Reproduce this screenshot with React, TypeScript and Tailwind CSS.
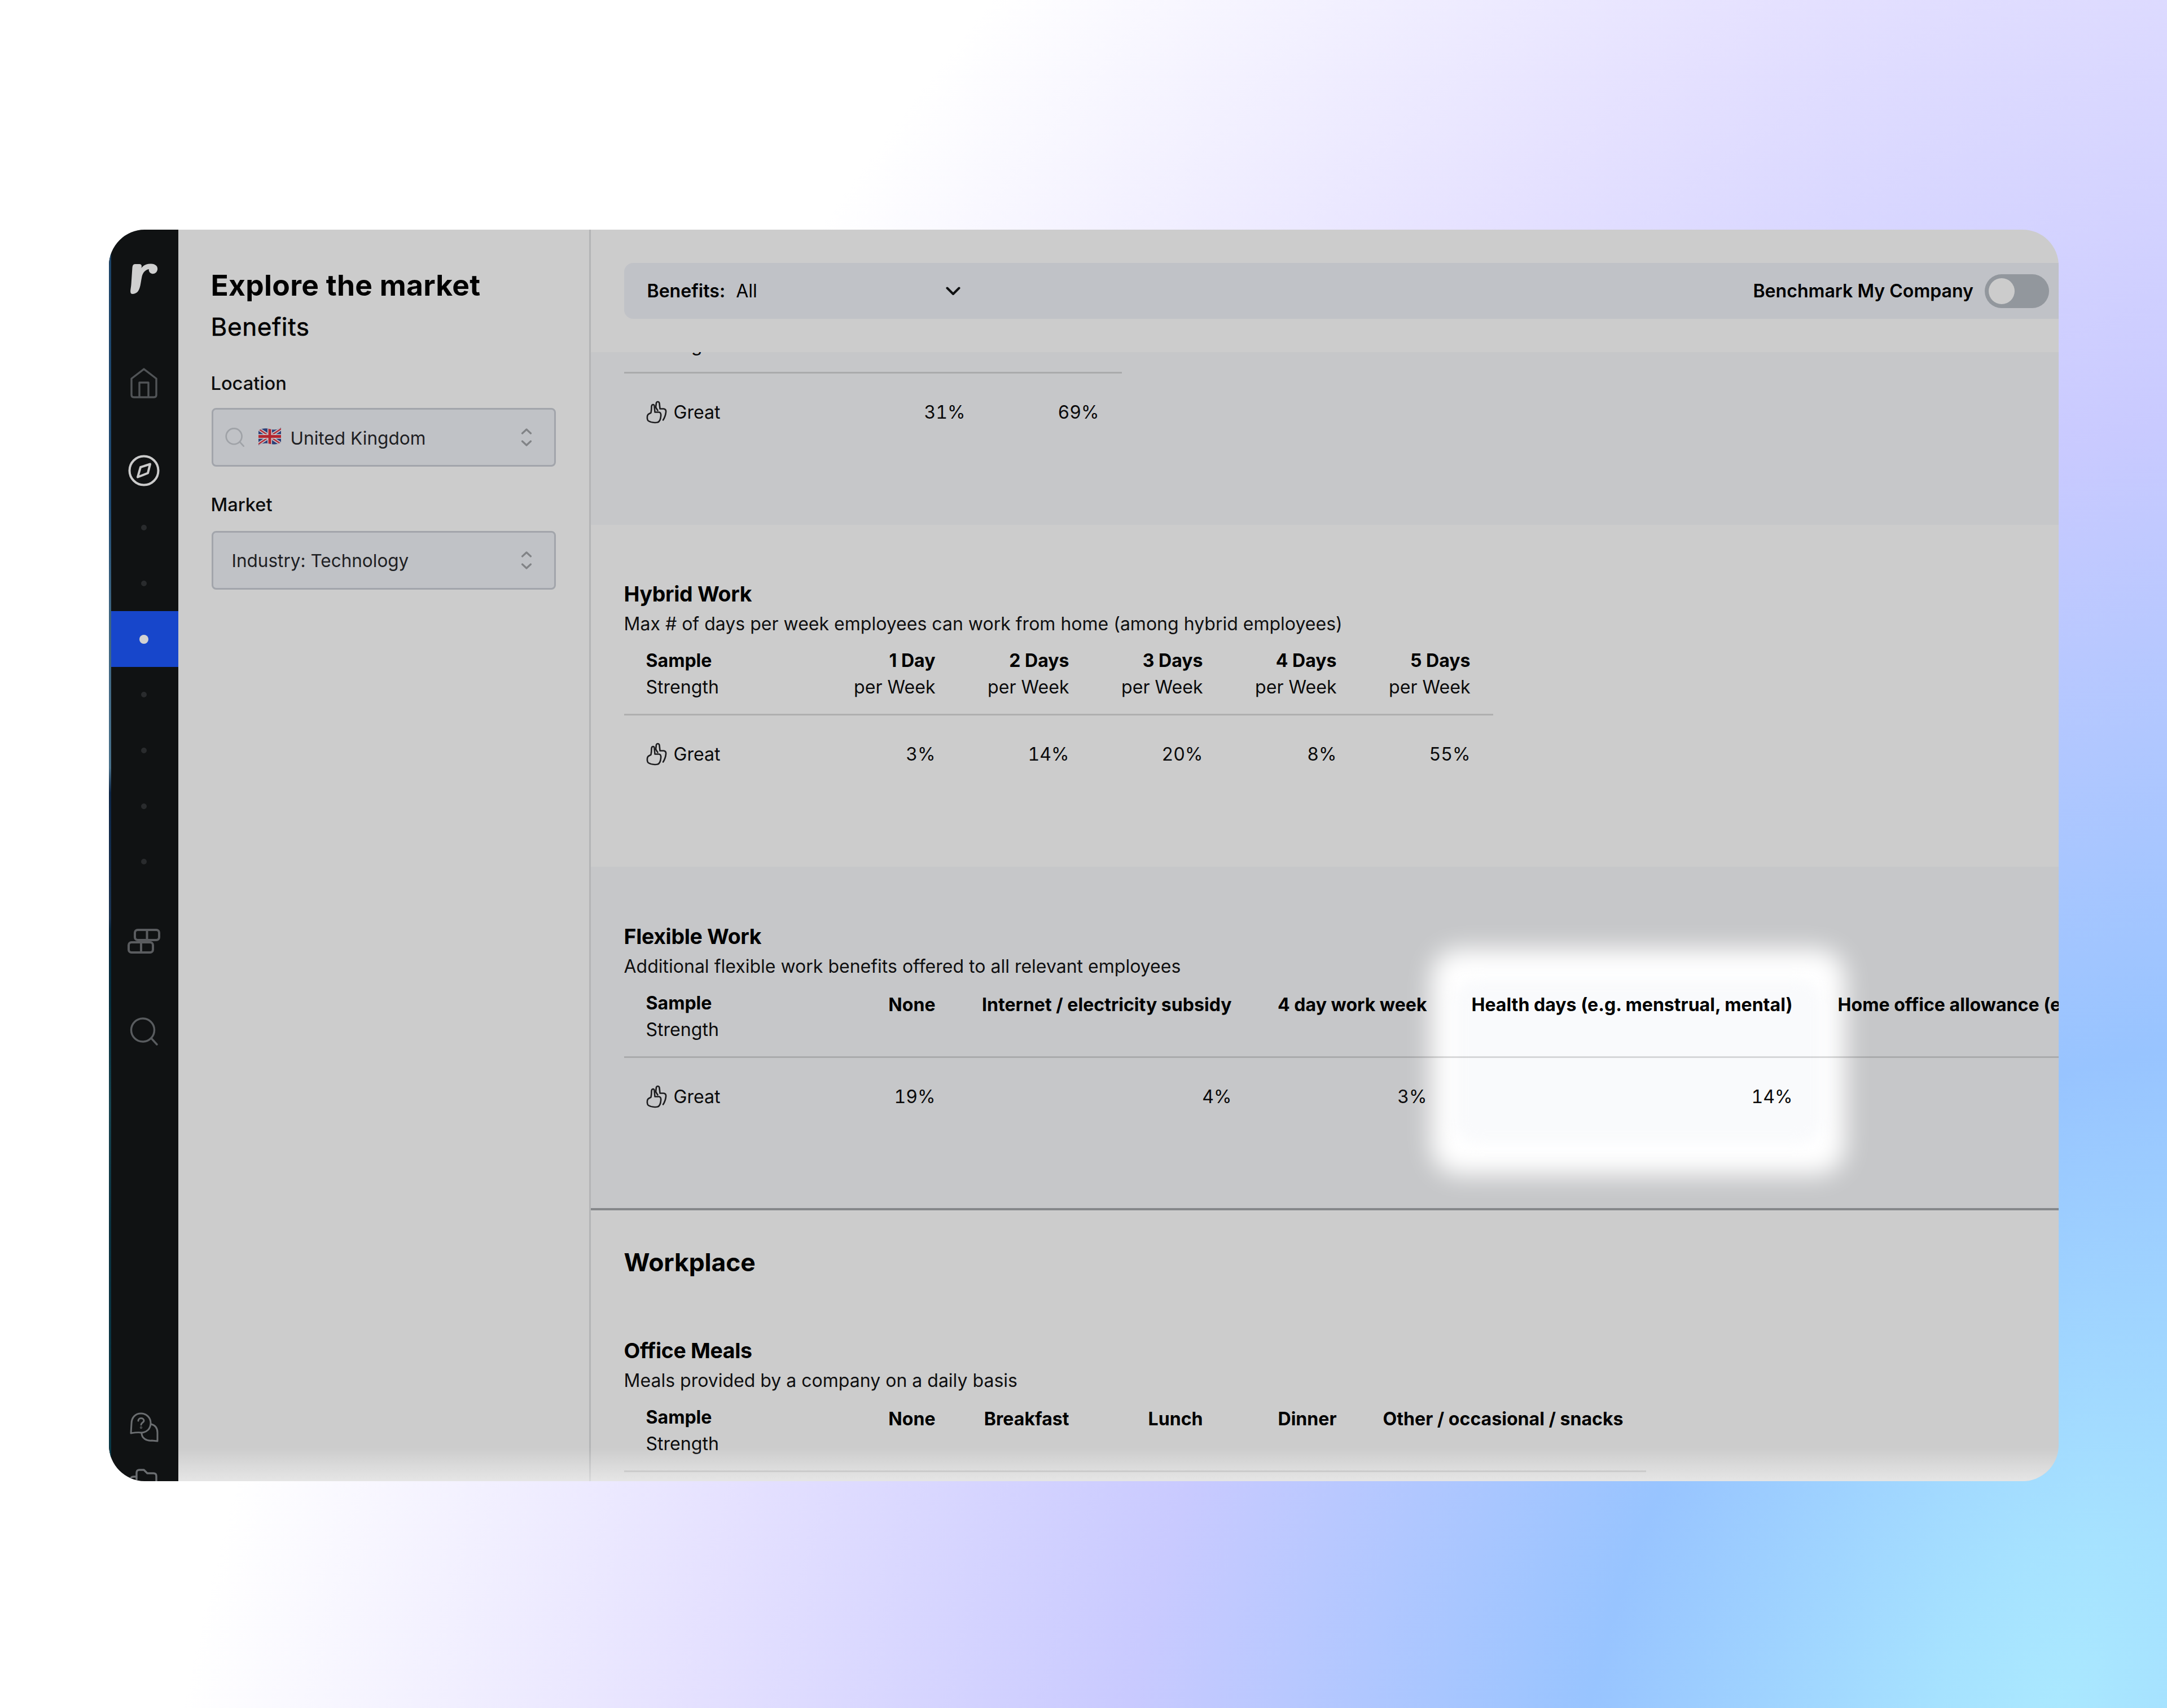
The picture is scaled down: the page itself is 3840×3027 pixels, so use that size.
import type { ReactNode } from "react";

type Column = { label: string; sub?: string; value?: string; width: number };

const remoteWork: Column[] = [
  { label: "", value: "31%", width: 237 },
  { label: "", value: "69%", width: 237 },
];

const hybridWork: Column[] = [
  { label: "1 Day", sub: "per Week", value: "3%", width: 237 },
  { label: "2 Days", sub: "per Week", value: "14%", width: 237 },
  { label: "3 Days", sub: "per Week", value: "20%", width: 237 },
  { label: "4 Days", sub: "per Week", value: "8%", width: 237 },
  { label: "5 Days", sub: "per Week", value: "55%", width: 237 },
];

const flexibleWork: Column[] = [
  { label: "None", value: "19%", width: 237 },
  { label: "Internet / electricity subsidy", value: "4%", width: 525 },
  { label: "4 day work week", value: "3%", width: 346 },
  { label: "Health days (e.g. menstrual, mental)", value: "14%", width: 648 },
  { label: "Home office allowance (e.g. desk)", value: "", width: 612 },
];

const officeMeals: Column[] = [
  { label: "None", width: 237 },
  { label: "Breakfast", width: 237 },
  { label: "Lunch", width: 237 },
  { label: "Dinner", width: 237 },
  { label: "Other / occasional / snacks", width: 508 },
];

function Logo() {
  return (
    <svg width="50" height="56" viewBox="0 0 50 56" fill="#cfcfcf">
      <path d="M9 2H17Q21 2 21 6L20.5 9C25 3 31 1 38 1.5C46 2 50 6 49 12C48 17 44 20 39 19C35 18 33 14 34 11C28 12 23 17 21.5 24C19 36 19 46 13 52C9 55 4 56 2 54C0 51 2 45 2.5 38L4.5 8Q5 2 9 2Z" />
    </svg>
  );
}

function HomeIcon() {
  return (
    <svg width="50" height="54" viewBox="0 0 50 54" fill="none" stroke="#515457" strokeWidth="3.4" strokeLinejoin="round" strokeLinecap="round">
      <path d="M3 19 25 2 47 19V48Q47 52 43 52H7Q3 52 3 48Z" />
      <path d="M17 51V26H33V51" />
    </svg>
  );
}

function CompassIcon() {
  return (
    <svg width="56" height="56" viewBox="0 0 56 56" fill="none" stroke="#cbcbcb" strokeWidth="4" strokeLinejoin="round">
      <circle cx="28" cy="28" r="25.500" />
      <path d="M39 16.500 35 32.500 17 39.500 22 22Z" />
    </svg>
  );
}

function BricksIcon() {
  return (
    <svg width="58" height="44" viewBox="0 0 58 44" fill="none" stroke="#5a5c5f" strokeWidth="4">
      <rect x="13" y="2" width="43" height="18" rx="5" />
      <path d="M34.500 2V20M24 24V42" />
      <rect x="2" y="24" width="43" height="18" rx="5" />
    </svg>
  );
}

function SearchIcon({ size, color, weight }: { size: number; color: string; weight: number }) {
  return (
    <svg width={size} height={size} viewBox="0 0 50 50" fill="none" stroke={color} strokeWidth={weight} strokeLinecap="round">
      <circle cx="23" cy="22.500" r="20.500" />
      <path d="M38 37 48 48" />
    </svg>
  );
}

function ChatIcon() {
  return (
    <svg width="54" height="54" viewBox="0 0 54 54" fill="none" stroke="#6b6e71" strokeWidth="3" strokeLinejoin="round" strokeLinecap="round">
      <path d="M3 37 4 20C4 9 11 2 21 2 31 2 38 10 38 19 38 29 31 36 21 36 16 35 9 36 3 37Z" />
      <path d="M39 21C47 23 50 29 50 36V51L40 50C31 51 22 46 22 37" />
      <path d="M16 15C16 9 26 9 26 15 26 18 21 18 21 22" />
      <circle cx="21" cy="27" r="0.6" />
    </svg>
  );
}

function FolderIcon() {
  return (
    <svg width="54" height="50" viewBox="0 0 54 50" fill="none" stroke="#6b6e71" strokeWidth="3.400" strokeLinejoin="round">
      <path d="M13 50V8Q13 3 18 3H26L32 9H43Q48 9 48 14V50" />
      <path d="M12 15H8Q2 15 2 21V50" />
    </svg>
  );
}

function SortIcon() {
  return (
    <svg width="22" height="34" viewBox="0 0 22 34" fill="none" stroke="#818386" strokeWidth="3.200" strokeLinecap="round" strokeLinejoin="round">
      <path d="M3.500 10 11 3 18.500 10M3.500 24 11 31 18.500 24" />
    </svg>
  );
}

function FlagIcon() {
  return (
    <svg width="40" height="31" viewBox="0 0 40 31">
      <defs>
        <clipPath id="flag">
          <path d="M0 5C8 0 14 1 20 2.500 27 4 33 4 40 0V26C33 30 27 30 20 28.500 14 27 8 27 0 31Z" />
        </clipPath>
      </defs>
      <g clipPath="url(#flag)">
        <rect width="40" height="31" fill="#2c4078" />
        <path d="M0 2 40 29M40 2 0 29" stroke="#c8c8cc" strokeWidth="6" />
        <path d="M0 2 40 29M40 2 0 29" stroke="#b3303a" strokeWidth="2.600" />
        <path d="M20 0V31M0 15.500H40" stroke="#c8c8cc" strokeWidth="8" />
        <path d="M20 0V31M0 15.500H40" stroke="#b3262f" strokeWidth="5" />
      </g>
    </svg>
  );
}

function ThumbsIcon() {
  return (
    <svg width="38" height="42" viewBox="0 0 38 42" fill="none" stroke="#1d1d1f" strokeWidth="2.600" strokeLinejoin="round" strokeLinecap="round">
      <path d="M8.500 21.500C9.500 17 9.500 14 9.500 10.500 10 6 14 6 14.500 9.500L15.500 20.500H23C26 21 26.500 24 26 28 25.500 33 24 37.500 20 38.500 15 39.500 8 38.500 4 36 1.500 34 1.500 29 2.500 26 3.500 23.500 6.500 23 8.500 21.500Z" />
      <path d="M17 12 18 4C19 1 23 1.500 23.500 5L24.500 14.500H31C34 15 35.500 17 35 20.500 34.500 25 33 30 30 34.500" />
      <path d="M17 12 20.500 17.500" />
    </svg>
  );
}

function Sidebar() {
  return (
    <aside className="flex h-full w-[122.500px] shrink-0 bg-[#101213]">
      <div className="w-1 shrink-0 bg-[linear-gradient(180deg,#1d4468_0%,#1f4a72_22%,#3d6480_30%,#48708a_43%,#0d2748_45%,#1b3452_55%,#06283f_56%,#06303f_62%,#174450_70%,#0b3240_80%,#0a3a48_100%)]" />
      <nav className="flex flex-1 flex-col items-center">
        <div className="-ml-0.5 mt-[59px] h-14"><Logo /></div>
        <div className="-ml-0.5 mt-[130px] h-[54px]"><HomeIcon /></div>
        <div className="-ml-0.5 mt-[100px] h-14"><CompassIcon /></div>
        <ul className="mt-6 w-full">
          {[0, 1, 2, 3, 4, 5, 6].map((i) =>
            i === 2 ? (
              <li key={i} className="flex h-[98.700px] items-center justify-center bg-[#1746cb]">
                <span className="-ml-0.5 size-4 rounded-full bg-[#d2d2d2]" />
              </li>
            ) : (
              <li key={i} className="flex h-[98.700px] items-center justify-center">
                <span className="-ml-0.5 size-2.5 rounded-full bg-[#292b2d]" />
              </li>
            ),
          )}
        </ul>
        <div className="-ml-0.5 mt-[69px] h-11"><BricksIcon /></div>
        <div className="-ml-0.5 mt-[113px] h-[50px]"><SearchIcon size={50} color="#595c5f" weight={3.4} /></div>
        <div className="mt-[650px] h-[54px]"><ChatIcon /></div>
        <div className="mt-[45px]"><FolderIcon /></div>
      </nav>
    </aside>
  );
}

function Filters() {
  return (
    <section className="w-[728px] shrink-0 pl-[59px] pt-[68px] text-black">
      <h1 className="-ml-px text-[51.500px] font-bold leading-[60px] tracking-[0.3px]">Explore the market</h1>
      <h2 className="-ml-px mt-[17px] text-[44px] font-normal leading-[54px] tracking-[0.6px] [-webkit-text-stroke:0.6px_black]">Benefits</h2>
      <p className="-ml-px mt-[50px] text-[32.600px] font-medium leading-[46px] text-[#0c0d0e]">Location</p>
      <div className="mt-[21px] flex h-[104px] w-[610px] items-center rounded-lg border-[3px] border-[#a2a5ab] bg-[#c0c2c6] pl-[21px] pr-[38px]">
        <SearchIcon size={34} color="#9fa2a7" weight={4} />
        <span className="-mt-1 ml-[25px]"><FlagIcon /></span>
        <span className="ml-[17px] flex-1 pt-1 text-[31.600px] leading-[46px] text-[#1e2023]">United Kingdom</span>
        <SortIcon />
      </div>
      <p className="-ml-px mt-11 text-[32.600px] font-medium leading-[46px] text-[#0c0d0e]">Market</p>
      <div className="mt-6 flex h-[104px] w-[610px] items-center rounded-lg border-[3px] border-[#a2a5ab] bg-[#c0c2c6] pl-[33px] pr-[38px]">
        <span className="flex-1 pt-0.5 text-[31.500px] leading-[46px] text-[#1e2023]">Industry: Technology</span>
        <SortIcon />
      </div>
    </section>
  );
}

function BenefitsTable({ columns, lead }: { columns: Column[]; lead: number }) {
  const hasValues = columns.some((c) => c.value !== undefined);
  const sample = { width: lead };
  return (
    <div className="relative w-max text-[#0a0a0b]">
      <div className="flex h-[121px] border-b-[3px] border-black/[0.14]">
        <div className="shrink-0 pl-[39px] text-[32.100px] leading-[47px]" style={sample}>
          <p className="font-bold text-black">Sample</p>
          <p>Strength</p>
        </div>
        {columns.map((c, i) => (
          <div key={i} className="shrink-0 whitespace-nowrap pr-10 text-right text-[32.100px] leading-[47px]" style={{ width: c.width }}>
            <p className={c.sub ? "font-bold text-black" : "pt-[3px] font-bold text-black"}>{c.label}</p>
            {c.sub && <p>{c.sub}</p>}
          </div>
        ))}
      </div>
      {hasValues && (
        <div className="flex h-[93px] items-end text-[32.100px] leading-[48px]">
          <div className="flex shrink-0 items-center pl-[39px]" style={sample}>
            <ThumbsIcon />
            <span className="ml-[11px]">Great</span>
          </div>
          {columns.map((c, i) => (
            <p key={i} className="shrink-0 pr-10 text-right tabular-nums" style={{ width: c.width }}>{c.value}</p>
          ))}
        </div>
      )}
    </div>
  );
}

function Block({ title, text, children }: { title: string; text: string; children: ReactNode }) {
  return (
    <>
      <h3 className="relative text-[37.400px] font-bold leading-[56px] tracking-[-0.3px] text-black">{title}</h3>
      <p className="relative mb-4 text-[32.030px] leading-[50px] text-[#0f0f10]">{text}</p>
      {children}
    </>
  );
}

export default function App() {
  return (
    <main className="relative flex h-[3027px] w-[3840px] overflow-hidden bg-white pl-[193px] pt-[407px] font-['Inter',sans-serif]">
      <div className="absolute left-[-3357px] top-[-3988px] h-[14000px] w-[14000px] rotate-[21.820deg] bg-[radial-gradient(3185px_4834px_at_center,#aae8ff_0%,#a6e2ff_6.200%,#98c4ff_24.800%,#c9caff_49.500%,#e5e1ff_73.200%,#ffffff_100%)]" />
      <div className="relative flex h-[2218px] w-[3455px] overflow-hidden rounded-[64px] bg-[#cccccc]">
        <Sidebar />
        <Filters />
        <div className="flex min-w-0 flex-1 flex-col border-l-[3px] border-[#b4b5b6]">
          <header className="flex h-[217px] shrink-0 items-start pl-[59px] pt-[59px]">
            <div className="flex h-[99px] flex-1 items-center rounded-l-2xl bg-[#c0c2c7] pl-[41px] pr-[17px] text-[32.100px] text-black">
              <span className="pt-0.5 font-semibold">Benefits:</span>
              <span className="ml-[19px] pt-0.5">All</span>
              <svg className="ml-[333px]" width="28" height="18" viewBox="0 0 28 18" fill="none" stroke="#101112" strokeWidth="4" strokeLinecap="round" strokeLinejoin="round">
                <path d="M3.500 3.500 14 14 24.500 3.500" />
              </svg>
              <span className="ml-auto pt-0.5 font-semibold">Benchmark My Company</span>
              <span className="ml-5 flex h-[60px] w-[114px] items-center rounded-full bg-[#92979d] pl-[7px]">
                <span className="size-[46px] rounded-full bg-[#cccccc]" />
              </span>
            </div>
          </header>
          <div className="min-h-0 flex-1 overflow-hidden">
            <section className="h-[306px] overflow-hidden bg-[#c6c7c9] pl-[59px]">
              <div className="-mt-[83px]">
                <BenefitsTable columns={remoteWork} lead={408} />
              </div>
            </section>
            <section className="h-[606px] pl-[59px] pt-[95px]">
              <Block title="Hybrid Work" text="Max # of days per week employees can work from home (among hybrid employees)">
                <BenefitsTable columns={hybridWork} lead={355} />
              </Block>
            </section>
            <section className="relative h-[609px] border-b-4 border-[#85878a] bg-[#c6c7c9] pl-[59px] pt-24">
              <div className="absolute left-[1489px] top-[146px] h-[400px] w-[734px] rounded-[50px] bg-white blur-[22px]" />
              <div className="absolute left-[1530px] top-[200px] h-[290px] w-[652px] rounded-[40px] bg-[#f9fafc] blur-[12px]" />
              <Block title="Flexible Work" text="Additional flexible work benefits offered to all relevant employees">
                <BenefitsTable columns={flexibleWork} lead={355} />
              </Block>
            </section>
            <section className="pl-[59px] pt-[62px]">
              <h2 className="mb-[99px] text-[44.400px] font-bold leading-[60px] tracking-[-0.1px] text-black">Workplace</h2>
              <Block title="Office Meals" text="Meals provided by a company on a daily basis">
                <BenefitsTable columns={officeMeals} lead={355} />
              </Block>
            </section>
          </div>
        </div>
        <div className="absolute bottom-0 left-[123px] right-0 h-[60px] bg-linear-to-b from-white/0 to-white/50" />
      </div>
    </main>
  );
}
